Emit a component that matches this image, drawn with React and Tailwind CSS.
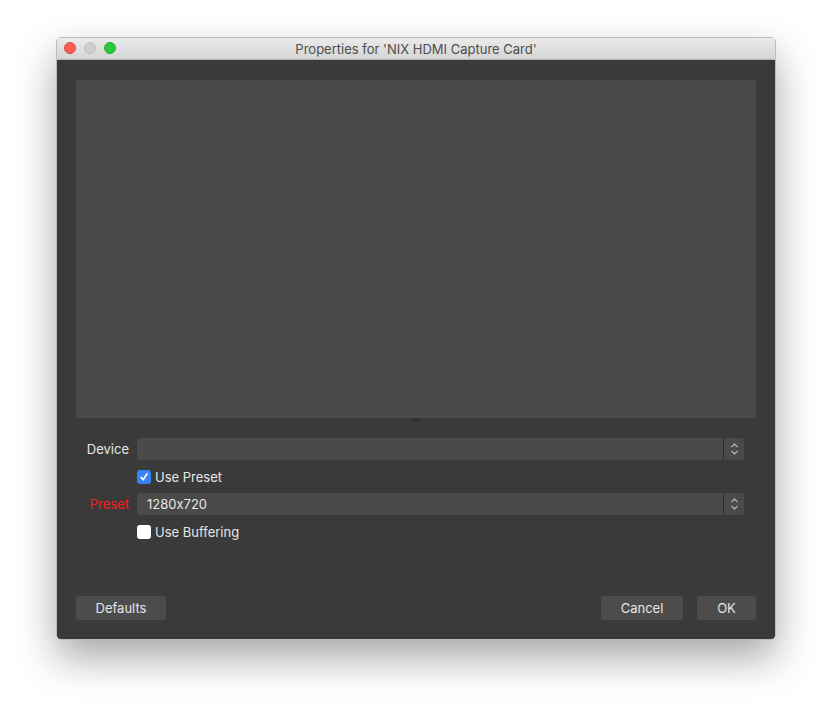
export default function App() {
  const Stepper = () => (
    <div className="w-[21px] h-full flex items-center justify-center border-l border-[#2e2e2e]">
      <svg width="9" height="14" viewBox="0 0 9 14" fill="none" stroke="#bdbdbd" strokeWidth="1.1">
        <path d="M1.5 5 L4.5 2 L7.5 5" />
        <path d="M1.5 9 L4.5 12 L7.5 9" />
      </svg>
    </div>
  );
  return (
    <div className="w-[832px] h-[714px] bg-white pt-[37px] pl-[56px] [font-family:Inter,'Liberation_Sans',sans-serif] [font-feature-settings:'calt'_0]">
      <div className="w-[720px] h-[603px] rounded-[5px] overflow-hidden flex flex-col border border-[#bcbcbc] shadow-[0_18px_40px_rgba(0,0,0,0.35)]">
        <div className="h-[22px] shrink-0 relative flex items-center justify-center bg-gradient-to-b from-[#ebebeb] to-[#d5d5d5] border-b border-[#b4b4b4]">
          <div className="absolute left-[7px] top-[4px] flex gap-[8px]">
            <div className="w-[12px] h-[12px] rounded-full bg-[#fd5f57] border border-[#e0443e]" />
            <div className="w-[12px] h-[12px] rounded-full bg-[#d0d0d0] border border-[#bdbdbd]" />
            <div className="w-[12px] h-[12px] rounded-full bg-[#28c840] border border-[#1dad2b]" />
          </div>
          <span className="pt-[2px] text-[13px] text-[#4d4d4d]">Properties for 'NIX HDMI Capture Card'</span>
        </div>
        <div className="flex-1 bg-[#3a3a3a] px-[19px] pt-[20px] pb-[19px] flex flex-col">
          <div className="h-[338px] bg-[#4a4a4a]" />
          <div className="h-[20px] flex justify-center">
            <div className="w-[8px] h-[4px] rounded-b-full bg-[#2f2f2f]" />
          </div>
          <div className="flex flex-col pr-[12px]">
            <div className="flex items-center h-[22px]">
              <div className="w-[53px] pt-[2px] text-right text-[13px] text-[#e6e6e6]">Device</div>
              <div className="ml-[8px] flex-1 h-[22px] rounded-[3px] bg-[#4a4a4a] flex justify-end">
                <Stepper />
              </div>
            </div>
            <div className="flex items-center h-[14px] mt-[10px] ml-[61px]">
              <div className="w-[14px] h-[14px] rounded-[3px] bg-[#3b82f6] flex items-center justify-center">
                <svg width="10" height="10" viewBox="0 0 10 10" fill="none" stroke="white" strokeWidth="1.6" strokeLinecap="round" strokeLinejoin="round">
                  <path d="M2 5.3 L4.2 7.8 L8 1.8" />
                </svg>
              </div>
              <span className="ml-[4px] pt-[2px] text-[13px] text-[#e6e6e6]">Use Preset</span>
            </div>
            <div className="flex items-center h-[22px] mt-[9px]">
              <div className="w-[53px] pt-[2px] text-right text-[13px] text-[#ff1a1a]">Preset</div>
              <div className="ml-[8px] flex-1 h-[22px] rounded-[3px] bg-[#4a4a4a] flex items-center justify-between">
                <span className="pl-[10px] pt-[2px] text-[13px] text-[#e6e6e6]">1280x720</span>
                <Stepper />
              </div>
            </div>
            <div className="flex items-center h-[14px] mt-[10px] ml-[61px]">
              <div className="w-[14px] h-[14px] rounded-[3px] bg-white" />
              <span className="ml-[4px] pt-[2px] text-[13px] text-[#e6e6e6]">Use Buffering</span>
            </div>
          </div>
          <div className="flex-1" />
          <div className="flex items-center">
            <div className="w-[90px] h-[24px] pt-[2px] rounded-[3px] bg-[#4c4c4c] flex items-center justify-center text-[13px] text-[#e6e6e6]">Defaults</div>
            <div className="flex-1" />
            <div className="w-[82px] h-[24px] pt-[2px] rounded-[3px] bg-[#4c4c4c] flex items-center justify-center text-[13px] text-[#e6e6e6]">Cancel</div>
            <div className="ml-[14px] w-[59px] h-[24px] pt-[2px] rounded-[3px] bg-[#4c4c4c] flex items-center justify-center text-[13px] text-[#e6e6e6]">OK</div>
          </div>
        </div>
      </div>
    </div>
  );
}
